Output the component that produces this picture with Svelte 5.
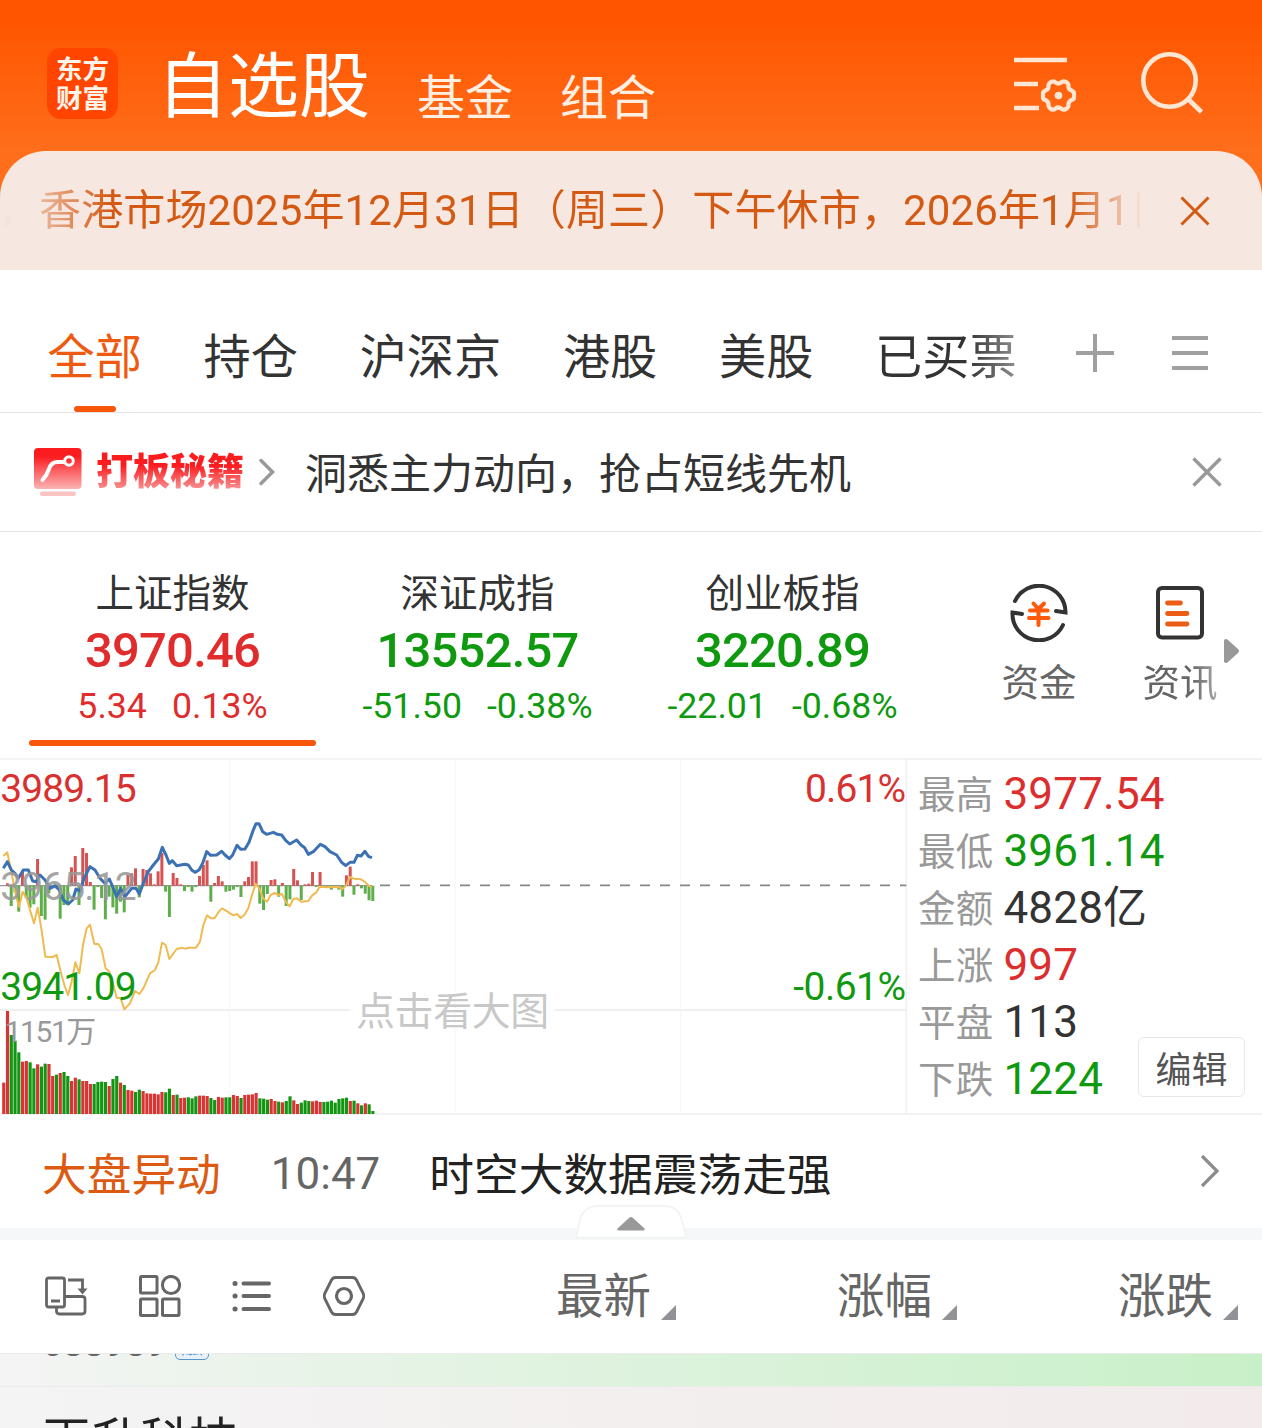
<script>
  const tabs = ["全部", "持仓", "沪深京", "港股", "美股", "已买票"];

  const indices = [
    { name: "上证指数", value: "3970.46", change: "5.34", pct: "0.13%", up: true, active: true },
    { name: "深证成指", value: "13552.57", change: "-51.50", pct: "-0.38%", up: false },
    { name: "创业板指", value: "3220.89", change: "-22.01", pct: "-0.68%", up: false },
  ];

  const stats = [
    { label: "最高", value: "3977.54", tone: "up" },
    { label: "最低", value: "3961.14", tone: "down" },
    { label: "金额", value: "4828亿", tone: "flat" },
    { label: "上涨", value: "997", tone: "up" },
    { label: "平盘", value: "113", tone: "flat" },
    { label: "下跌", value: "1224", tone: "down" },
  ];

  const columns = ["最新", "涨幅", "涨跌"];

  // The chart is drawn on a grid three times finer than its size on the page.
  const STEP = 11.3;
  const ZERO = 392;
  const BASE = 1077;

  const volumeTops = [
    983, 768, 840, 857, 892, 920, 918, 922, 940, 928, 935, 926, 927, 963, 959, 954, 951, 963, 978, 968,
    973, 978, 978, 987, 987, 981, 980, 981, 993, 972, 963, 983, 990, 1005, 1007, 1011, 1004, 1008, 1015,
    1016, 1016, 1018, 1011, 1012, 1001, 1020, 1019, 1029, 1028, 1027, 1030, 1024, 1022, 1022, 1023, 1029,
    1035, 1026, 1028, 1027, 1027, 1020, 1023, 1029, 1020, 1019, 1018, 1014, 1030, 1031, 1034, 1032, 1038,
    1040, 1042, 1038, 1024, 1036, 1047, 1043, 1036, 1038, 1039, 1037, 1041, 1041, 1040, 1037, 1043, 1032,
    1030, 1028, 1038, 1037, 1045, 1051, 1045, 1048, 1068,
  ];
  const volumeSides =
    "RRGGGRRGGRGGRRGRGGRRGRRRGGGGRGGRGRRGGRRRRRRGGRGRRGGGRRRGGRRGGRRGRRRRGGGRRGRGGRRGGGRRRGGGGGGGRGRGRGG";

  const forceEnds = [
    392, 385, 453, 412, 470, 346, 430, 458, 448, 312, 483, 494, 415, 400, 400, 491, 450, 450, 337, 303,
    450, 279, 294, 381, 464, 396, 429, 493, 425, 457, 476, 440, 472, 360, 355, 340, 427, 342, 345, 355,
    388, 349, 294, 410, 486, 354, 369, 388, 408, 396, 410, 396, 363, 330, 316, 440, 384, 363, 379, 410,
    408, 404, 396, 426, 379, 366, 319, 319, 446, 465, 417, 375, 373, 425, 384, 453, 433, 342, 376, 435,
    388, 386, 351, 396, 351, 396, 396, 404, 395, 404, 425, 361, 335, 419, 388, 400, 416, 436, 438,
  ];

  const priceLine =
    "10,340 22,320 34,345 45,355 55,370 70,345 85,345 98,378 108,380 120,360 135,375 150,400 165,392 178,405 190,435 205,447 218,435 228,402 240,408 252,370 270,335 285,345 300,370 315,385 328,372 340,400 350,425 362,400 375,425 395,400 408,400 418,417 430,385 445,350 460,330 475,312 487,277 498,300 508,325 517,317 530,332 555,328 565,330 576,346 585,352 597,345 608,325 620,290 632,301 650,300 665,289 675,300 688,311 698,300 711,271 722,283 735,282 747,262 758,230 768,206 777,206 788,230 800,238 820,232 832,238 845,240 857,256 869,267 890,255 903,270 914,278 925,298 940,290 961,268 975,275 990,290 1010,300 1025,322 1037,332 1050,322 1062,322 1072,301 1083,303 1095,289 1106,305 1116,308";
  const averageLine =
    "10,303 22,292 34,350 45,410 57,455 68,410 80,430 90,465 102,505 113,458 124,520 136,605 158,606 170,600 182,650 193,690 204,720 215,680 226,622 238,655 249,570 260,520 270,509 283,567 295,567 305,583 317,640 328,650 340,690 350,728 362,730 373,763 390,745 405,708 418,717 430,700 450,655 465,645 475,622 486,563 497,570 508,612 530,582 545,578 555,581 567,578 588,578 600,560 610,510 621,481 632,490 644,490 655,472 666,460 678,467 690,475 700,481 711,477 722,489 733,480 745,460 756,420 767,386 778,400 789,430 801,440 812,420 824,414 835,420 846,417 857,440 869,454 880,432 891,430 903,440 925,438 936,422 948,413 959,395 980,397 1000,396 1016,396 1027,402 1038,392 1050,366 1062,371 1083,373 1095,381 1106,392 1116,397";
</script>

<div class="page">
  <div class="top">
    <header class="head">
      <div class="logo"><span>东方</span><span>财富</span></div>
      <h1>自选股</h1>
      <span class="sub">基金</span>
      <span class="sub second">组合</span>
      <svg class="manage" width="64" height="60" viewBox="0 0 64 60" fill="none" stroke="#ffe6d3" stroke-width="4.6">
        <path d="M1 5H54M1 29H25M1 53H26" />
        <path
          stroke-width="4.2"
          stroke-linejoin="round"
          d="M38 27Q41 25.5 42.5 27.5Q45.3 29.5 48 27.5Q50 25.5 53 27Q56 28.8 55.5 31.5Q55.5 34.5 58.5 35.5Q61 36.5 61 38.5V42.5Q61 44.5 58.5 45Q55.5 46.5 55.5 49.5Q56 52 53 54Q50 55.5 48 53.5Q45.3 51.5 42.5 53.5Q41 55.5 38 54Q35 52 35.5 49.5Q35.5 46.5 32.5 45Q30 44.5 30 42.5V38.5Q30 36.5 32.5 35.5Q35.5 34.5 35.5 31.5Q35 28.8 38 27Z"
        />
        <circle cx="45.5" cy="40.5" r="3.8" fill="#ffe6d3" stroke="none" />
      </svg>
      <svg class="search" width="64" height="64" viewBox="0 0 64 64" fill="none" stroke="#ffe6d3" stroke-width="4.6">
        <circle cx="29.5" cy="29.5" r="26.2" />
        <path d="M48 48L61.5 61" />
      </svg>
    </header>

    <div class="notice">
      <div class="marquee"><i>，</i><span>香港市场2025年12月31日（周三）下午休市，2026年1月1日</span></div>
      <svg width="30" height="30" viewBox="0 0 30 30" stroke="#d45a14" stroke-width="3"><path d="M1.5 1.5L28.5 28.5M28.5 1.5L1.5 28.5" /></svg>
    </div>
  </div>

  <nav class="tabs">
    {#each tabs as tab, i}
      <span class="tab" class:on={i === 0} class:cut={i === tabs.length - 1}>{tab}</span>
    {/each}
    <svg class="plus" width="38" height="38" viewBox="0 0 38 38" stroke="#a0a0a0" stroke-width="4"><path d="M19 0V38M0 19H38" /></svg>
    <svg width="36" height="36" viewBox="0 0 36 36" stroke="#a0a0a0" stroke-width="4"><path d="M0 3H36M0 18H36M0 33H36" /></svg>
  </nav>

  <div class="promo">
    <svg width="48" height="49" viewBox="0 0 48 49" fill="none">
      <defs>
        <linearGradient id="badge" x1="0" y1="0" x2="0" y2="1">
          <stop offset="0.2" stop-color="#fb1c20" />
          <stop offset="1" stop-color="#fbb4b4" />
        </linearGradient>
      </defs>
      <rect x="0" y="0" width="47.5" height="41" rx="4" fill="url(#badge)" />
      <path d="M8.5 32Q13 27 15 21Q17 14 24 14H30" stroke="#fff" stroke-width="4" stroke-linecap="round" />
      <circle cx="35" cy="13" r="4.3" stroke="#fff" stroke-width="3" />
      <rect x="6" y="43.5" width="36" height="4.5" rx="2.2" fill="#fac4c4" />
    </svg>
    <b>打板秘籍</b>
    <svg class="more" width="17" height="28" viewBox="0 0 17 28" fill="none" stroke="#999" stroke-width="3.5" stroke-linecap="round"><path d="M3 2.5L14.5 14L3 25.5" /></svg>
    <p>洞悉主力动向，抢占短线先机</p>
    <svg class="close" width="30" height="30" viewBox="0 0 30 30" stroke="#999" stroke-width="3.4"><path d="M1.5 1.5L28.5 28.5M28.5 1.5L1.5 28.5" /></svg>
  </div>

  <section class="indices">
    {#each indices as item}
      <div class="index" class:active={item.active} class:up={item.up}>
        <span class="name">{item.name}</span>
        <strong>{item.value}</strong>
        <span class="delta"><span>{item.change}</span><span>{item.pct}</span></span>
      </div>
    {/each}
    <div class="entry funds">
      <svg width="58" height="58" viewBox="0 0 58 58" fill="none" stroke="#333" stroke-width="4" stroke-linecap="round">
        <path d="M5 17A26.5 26.5 0 0 1 55.5 28.5L46 27M53 41A26.5 26.5 0 0 1 2.5 28.5L12 30" />
        <path d="M23.5 19.5L28.5 25L34 19.5M20 26.5H37.5M19 34H38.5M28.5 26V41" stroke="#ff5a0a" />
      </svg>
      <span>资金</span>
    </div>
    <div class="entry news-entry">
      <svg width="48" height="54" viewBox="0 0 48 54" fill="none" stroke="#333" stroke-width="4">
        <rect x="2" y="2" width="44" height="49.5" rx="4" />
        <path d="M11.5 17H24.5M11.5 27.5H31M11.5 38H31" stroke="#ec5e18" stroke-width="4.8" stroke-linecap="round" />
      </svg>
      <span class="cut">资讯</span>
    </div>
    <svg class="next" width="15" height="24" viewBox="0 0 15 24"><path d="M0 1Q2-1 4 1L14 10Q16 12 14 14L4 23Q2 25 0 23Z" fill="#999" /></svg>
  </section>

  <section class="market">
    <svg class="chart" width="907" height="357" viewBox="0 9 2721 1071" fill="none">
      <path d="M0 12H2721M0 1077H2721M2719 12V1077" stroke="#f0f0f0" stroke-width="5" />
      <path d="M0 765H1051M1663 765H2719" stroke="#ececec" stroke-width="5" />
      <path d="M688 18V1077M1365 18V1077M2042 18V1077" stroke="#ececec" stroke-width="3" stroke-dasharray="3 3" />
      <path d="M0 392H1116" stroke="#999" stroke-width="4" />
      <path d="M1140 391H2719" stroke="#888" stroke-width="5" stroke-dasharray="30 30" />
      {#each forceEnds as end, i}
        <rect
          x={6.5 + i * STEP}
          y={Math.min(end, ZERO)}
          width="9"
          height={Math.abs(end - ZERO)}
          fill={end < ZERO ? "#d55353" : "#5fae4b"}
        />
      {/each}
      {#each volumeTops as y, i}
        <rect x={6.5 + i * STEP} {y} width="9.5" height={BASE - y} fill={volumeSides[i] === "R" ? "#d93434" : "#129612"} />
      {/each}
      <polyline points={averageLine} stroke="#efbb50" stroke-width="6" stroke-linejoin="round" />
      <polyline points={priceLine} stroke="#3c72b4" stroke-width="9" stroke-linejoin="round" />
      <g font-size="117">
        <text x="1" y="140" textLength="409" fill="#d93030">3989.15</text>
        <text x="1" y="434" textLength="409" fill="#999" fill-opacity="0.9">3965.12</text>
        <text x="1" y="735" textLength="409" fill="#0f990f">3941.09</text>
        <text x="2415" y="140" textLength="303" fill="#d93030">0.61%</text>
        <text x="2380" y="735" textLength="338" fill="#0f990f">-0.61%</text>
        <text x="14" y="861" font-size="90" textLength="275" fill="#999">1151万</text>
        <text x="1068" y="809" textLength="580" fill="#c8c8c8">点击看大图</text>
      </g>
    </svg>
    <div class="stats">
      {#each stats as stat}
        <div class="stat"><span class="label">{stat.label}</span><span class={stat.tone}>{stat.value}</span></div>
      {/each}
      <button class="edit">编辑</button>
    </div>
  </section>

  <div class="flash">
    <span class="tag">大盘异动</span>
    <time>10:47</time>
    <p>时空大数据震荡走强</p>
    <svg width="20" height="34" viewBox="0 0 20 34" fill="none" stroke="#8c8c8c" stroke-width="3.2"><path d="M2 2L17 17L2 32" /></svg>
  </div>

  <div class="band">
    <svg class="fold" width="112" height="34" viewBox="0 0 112 34">
      <path d="M1 32.5L5 15Q9 1 23 1H89Q103 1 107 15L111 32.5Z" fill="#fff" stroke="#f0f1f2" stroke-width="1.5" />
      <path d="M43 23L54 13Q56 11 58 13L69 23Q71 25.5 68 25.5H44Q41 25.5 43 23Z" fill="#999" />
    </svg>
  </div>

  <div class="toolbar">
    <svg width="44" height="42" viewBox="0 0 44 42" fill="none" stroke="#666" stroke-width="2.8">
      <rect x="2.5" y="3" width="18" height="29" rx="2" />
      <path d="M7 26H16M12.5 32V36Q12.5 39 15.5 39H38Q41 39 41 36V24Q41 21.5 38 21.5H21M24 5H38.5V14" />
      <path d="M33.5 13.5H43.5L38.5 19.5Z" fill="#666" stroke="none" />
    </svg>
    <svg width="42" height="42" viewBox="0 0 42 42" fill="none" stroke="#666" stroke-width="3">
      <rect x="1.5" y="1.5" width="16.5" height="16.5" rx="1" />
      <circle cx="32" cy="10" r="8.6" />
      <rect x="1.5" y="24" width="16.5" height="16.5" rx="1" />
      <rect x="23.5" y="24" width="16.5" height="16.5" rx="1" />
    </svg>
    <svg width="40" height="32" viewBox="0 0 40 32" fill="none" stroke="#666" stroke-width="4" stroke-linecap="round">
      <path d="M11.5 3.5H37M11.5 16H37M11.5 29H37" />
      <path d="M3 3.5h.1M3 16h.1M3 29h.1" stroke-width="5" />
    </svg>
    <svg width="42" height="40" viewBox="0 0 42 40" fill="none" stroke="#666" stroke-width="2.8">
      <path d="M12.5 1.5H29.5Q32 1.5 33.5 4L40 17Q41.5 20 40 23L33.5 36Q32 38.5 29.5 38.5H12.5Q10 38.5 8.5 36L2 23Q.5 20 2 17L8.5 4Q10 1.5 12.5 1.5Z" />
      <circle cx="21" cy="20" r="7.5" stroke-width="3.2" />
    </svg>
    {#each columns as column}
      <span class="col"><span>{column}</span><svg width="15" height="15" viewBox="0 0 15 15"><path d="M15 0V15H0Z" fill="#919196" /></svg></span>
    {/each}
  </div>

  <div class="row previous">
    <span class="code">688989</span><span class="flag">融</span>
  </div>
  <div class="row current">再升科技</div>
</div>

<style>
  :global(body) {
    background: #fff;
  }
  .page {
    width: 1262px;
    height: 1428px;
    overflow: hidden;
    background: #fff;
    color: #333;
    font-family: Roboto, "Noto Sans CJK SC", sans-serif;
    line-height: 1;
    white-space: nowrap;
  }
  .page * {
    box-sizing: border-box;
  }
  svg {
    flex: none;
    display: block;
  }
  p,
  h1 {
    margin: 0;
    font-weight: 400;
  }

  .top {
    background: linear-gradient(#ff5500 20px, #ff6e1b 150px);
  }
  .head {
    display: flex;
    height: 151px;
    padding: 48px 58px 0 47px;
    color: #fff;
  }
  .logo {
    display: flex;
    flex-direction: column;
    align-items: center;
    gap: 2px;
    width: 71px;
    height: 71px;
    padding-top: 9px;
    border-radius: 14px;
    background: #ff4500;
    color: #fff3ea;
    font-size: 26.5px;
    font-weight: 700;
  }
  h1 {
    margin: 3px 0 0 39px;
    font-size: 71px;
  }
  .sub {
    margin: 27px 0 0 47px;
    font-size: 48px;
    color: #ffeee2;
  }
  .second {
    margin-left: 47px;
  }
  .manage {
    margin: 7px 0 0 auto;
  }
  .search {
    margin: 3px 0 0 63px;
  }

  .notice {
    display: flex;
    align-items: center;
    height: 119px;
    padding-right: 52px;
    border-radius: 46px 46px 0 0;
    background: #f6e7e0;
    color: #d45a14;
    font-size: 42px;
  }
  .marquee {
    display: flex;
    width: 1141px;
    margin-right: 39px;
    overflow: hidden;
    line-height: 60px;
    letter-spacing: 0.13px;
    mask-image: linear-gradient(90deg, transparent 5px, #000 110px, #000 1070px, transparent 1143px);
  }
  .marquee i {
    flex: none;
    width: 39px;
    text-indent: -4px;
    font-style: normal;
  }

  .tabs {
    display: flex;
    align-items: center;
    gap: 61.7px;
    height: 143px;
    padding: 33px 53px 0 47.5px;
    border-bottom: 1px solid #e3e3e3;
    font-size: 47.2px;
  }
  .tab {
    position: relative;
    line-height: 60px;
  }
  .on {
    color: #ee5b10;
  }
  .on::after {
    content: "";
    position: absolute;
    left: 26.5px;
    bottom: -24px;
    width: 42px;
    height: 6px;
    border-radius: 3px;
    background: #f8560a;
  }
  .cut {
    mask-image: linear-gradient(90deg, #000 65%, rgba(0, 0, 0, 0.55));
  }
  .tabs svg {
    margin-top: -10px;
  }
  .tabs .plus {
    margin-right: -4px;
    margin-left: -2px;
  }

  .promo {
    display: flex;
    align-items: center;
    height: 119px;
    padding: 0 40px 0 34px;
    border-bottom: 1px solid #e3e3e3;
  }
  .promo b {
    margin: 2px 0 0 14px;
    background: linear-gradient(#fb1c20 35%, #f7a5a5 90%);
    background-clip: text;
    color: transparent;
    font-size: 37px;
    font-weight: 900;
    line-height: 50px;
  }
  .more {
    margin-left: 14px;
  }
  .promo p {
    margin-left: 30px;
    padding-top: 6px;
    font-size: 42px;
  }
  .close {
    margin-left: auto;
  }

  .indices {
    position: relative;
    display: flex;
    height: 226px;
    padding: 0 44px 0 20px;
  }
  .index {
    position: relative;
    display: flex;
    flex-direction: column;
    align-items: center;
    width: 305px;
    padding-top: 43px;
    color: #0f990f;
  }
  .index.up {
    color: #e02c2c;
  }
  .active::after {
    content: "";
    position: absolute;
    left: 9px;
    bottom: 12px;
    width: 287px;
    height: 6px;
    border-radius: 3px;
    background: #f8560a;
  }
  .name {
    color: #333;
    font-size: 38.5px;
  }
  .index strong {
    margin-top: 12px;
    font-size: 49px;
    font-weight: 500;
    letter-spacing: -0.8px;
  }
  .delta {
    display: flex;
    gap: 25px;
    margin-top: 14px;
    font-size: 35.7px;
  }
  .entry {
    display: flex;
    flex-direction: column;
    align-items: center;
    color: #666;
    font-size: 37.5px;
  }
  .funds {
    margin-left: 66.5px;
    padding-top: 52px;
  }
  .entry span {
    margin-top: 23px;
  }
  .news-entry {
    margin-left: 66px;
    padding-top: 54px;
  }
  .news-entry span {
    margin-top: 25px;
  }
  .next {
    position: absolute;
    right: 23px;
    top: 107px;
  }

  .market {
    display: flex;
    height: 357px;
  }
  .stats {
    position: relative;
    flex: 1;
    padding: 5px 0 0 11px;
    border-top: 2px solid #f2f2f2;
    border-bottom: 2px solid #f2f2f2;
  }
  .stat {
    display: flex;
    align-items: center;
    gap: 10px;
    height: 57px;
    color: #333;
    font-size: 44px;
    letter-spacing: 0.2px;
  }
  .label {
    padding-top: 5px;
    color: #999;
    font-size: 37.5px;
  }
  .up {
    color: #dc2e2e;
  }
  .down {
    color: #0f990f;
  }
  .edit {
    position: absolute;
    right: 17px;
    bottom: 16px;
    width: 107px;
    height: 60px;
    padding: 7px 0 0;
    border: 1px solid #e8e8e8;
    border-radius: 6px;
    background: #fff;
    color: #555;
    font: inherit;
    font-size: 36px;
    line-height: 1;
  }

  .flash {
    display: flex;
    align-items: center;
    height: 113px;
    padding: 9px 42px 0;
    font-size: 44.7px;
  }
  .tag {
    color: #dc5a12;
  }
  time {
    margin: -4px 0 0 50px;
    color: #666;
    font-size: 44px;
  }
  .flash p {
    margin-left: 49px;
    color: #222;
  }
  .flash svg {
    margin: -10px 0 0 auto;
  }

  .band {
    position: relative;
    height: 12px;
    background: #f6f7f9;
  }
  .fold {
    position: absolute;
    left: 575px;
    bottom: 1px;
  }

  .toolbar {
    display: flex;
    align-items: center;
    height: 113px;
    padding-left: 44px;
    color: #666;
  }
  .toolbar > svg {
    margin: -2px 51px 0 0;
  }
  .col {
    display: flex;
    flex: none;
    align-items: flex-end;
    gap: 10px;
    width: 281px;
    font-size: 47.5px;
    line-height: 51px;
  }
  .col svg {
    margin-bottom: 2px;
  }
  .col span {
    margin-bottom: -1px;
    padding-top: 1px;
  }
  .toolbar > svg + .col {
    margin-left: 140px;
  }

  .row {
    padding-left: 42px;
  }
  .previous {
    display: flex;
    align-items: flex-start;
    height: 34px;
    overflow: hidden;
    border-top: 1px solid #ebebeb;
    border-bottom: 1px solid #ebebeb;
    background: linear-gradient(90deg, #f4f4f4, #e6f3e6 30%, #c8f0c8);
    color: #666;
  }
  .code {
    margin-top: -29px;
    font-size: 37px;
  }
  .flag {
    width: 34px;
    height: 26px;
    margin: -20px 0 0 8px;
    border: 1.5px solid #5b93c9;
    border-radius: 5px;
    background: #e8f2fb;
    color: #5b93c9;
    font-size: 22px;
    text-align: center;
  }
  .current {
    height: 41px;
    padding-top: 30px;
    background: linear-gradient(90deg, #f4f4f4, #f3eeee 60%, #f3ebeb);
    color: #222;
    font-size: 49px;
  }
</style>
